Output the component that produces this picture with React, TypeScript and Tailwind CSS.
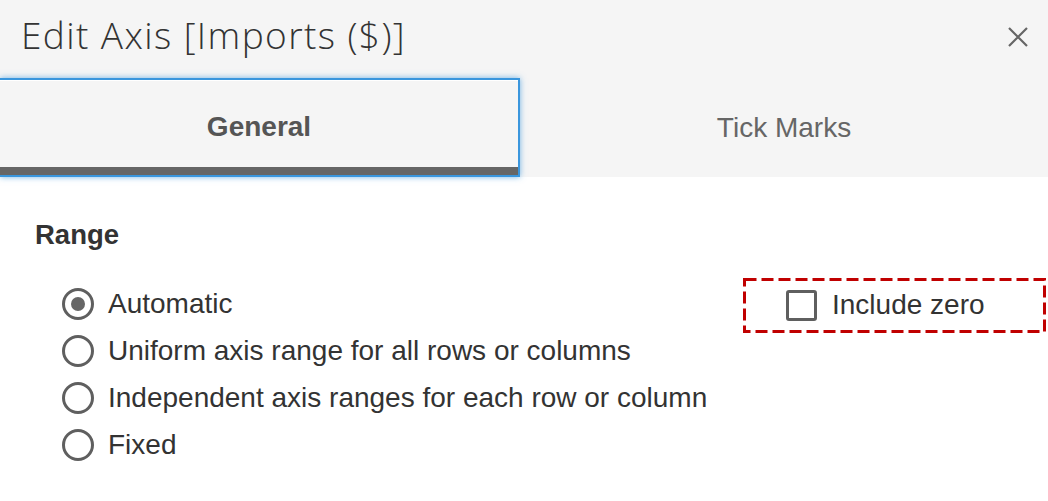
import React from 'react'

const options = [
  'Automatic',
  'Uniform axis range for all rows or columns',
  'Independent axis ranges for each row or column',
  'Fixed',
]

const Radio: React.FC<{ checked?: boolean }> = ({ checked }) => (
  <span className="flex h-[32px] w-[32px] shrink-0 items-center justify-center rounded-full border-[3px] border-[#5f5f5f]">
    {checked && <span className="h-[14px] w-[14px] rounded-full bg-[#666]" />}
  </span>
)

export default function App() {
  return (
    <div className="h-[501px] w-[1048px] overflow-hidden bg-white font-['Liberation_Sans',Arial,sans-serif] text-[#333]">
      {/* Title bar */}
      <header className="flex h-[78px] items-center justify-between bg-[#f5f5f5] pl-[21px] pr-[18px]">
        <h1 className="font-['Open_Sans',sans-serif] text-[37px] font-light leading-none tracking-[1.4px] text-[#333] -mt-[10px]">
          Edit Axis [Imports ($)]
        </h1>
        <svg width="24" height="24" viewBox="0 0 24 24" className="-mt-[5px]" aria-label="Close">
          <path d="M3 3 L21 21 M21 3 L3 21" stroke="#666" strokeWidth="2.2" fill="none" />
        </svg>
      </header>

      {/* Tabs */}
      <div className="flex h-[99px] bg-[#f5f5f5]">
        <div className="flex w-[520px] flex-col border-[2px] border-l-0 border-[#3a96dd] bg-[#f5f5f5] shadow-[0_0_6px_rgba(58,150,221,0.7)]">
          <div className="flex flex-1 items-center justify-center border-t border-white pt-[5px] text-[28px] font-bold text-[#555]">
            General
          </div>
          <div className="h-[8px] bg-[#666]" />
        </div>
        <div className="flex flex-1 items-center justify-center text-[28px] text-[#666]">
          Tick Marks
        </div>
      </div>

      {/* Content */}
      <div className="pt-[40px]">
        <h2 className="pl-[35px] text-[27.5px] font-bold leading-[36px]">Range</h2>
        <div className="mt-[27px] flex items-start pl-[62px]">
          <div className="flex flex-col">
            {options.map((o, i) => (
              <label key={o} className="flex h-[47px] items-center gap-[14px] text-[28px] leading-none">
                <Radio checked={i === 0} />
                <span>{o}</span>
              </label>
            ))}
          </div>
          <div className="relative ml-auto mr-[2px] -mt-[2px] flex h-[55px] w-[303px] items-center pl-[43px]">
            <svg className="absolute inset-0" width="303" height="55">
              <rect x="1.5" y="1.5" width="300" height="52" fill="none" stroke="#c00000" strokeWidth="3" strokeDasharray="12 5" />
            </svg>
            <span className="h-[31px] w-[31px] shrink-0 rounded-[3px] border-[3px] border-[#5f5f5f]" />
            <span className="ml-[15px] -mt-[2px] text-[28px] leading-none">Include zero</span>
          </div>
        </div>
      </div>
    </div>
  )
}
